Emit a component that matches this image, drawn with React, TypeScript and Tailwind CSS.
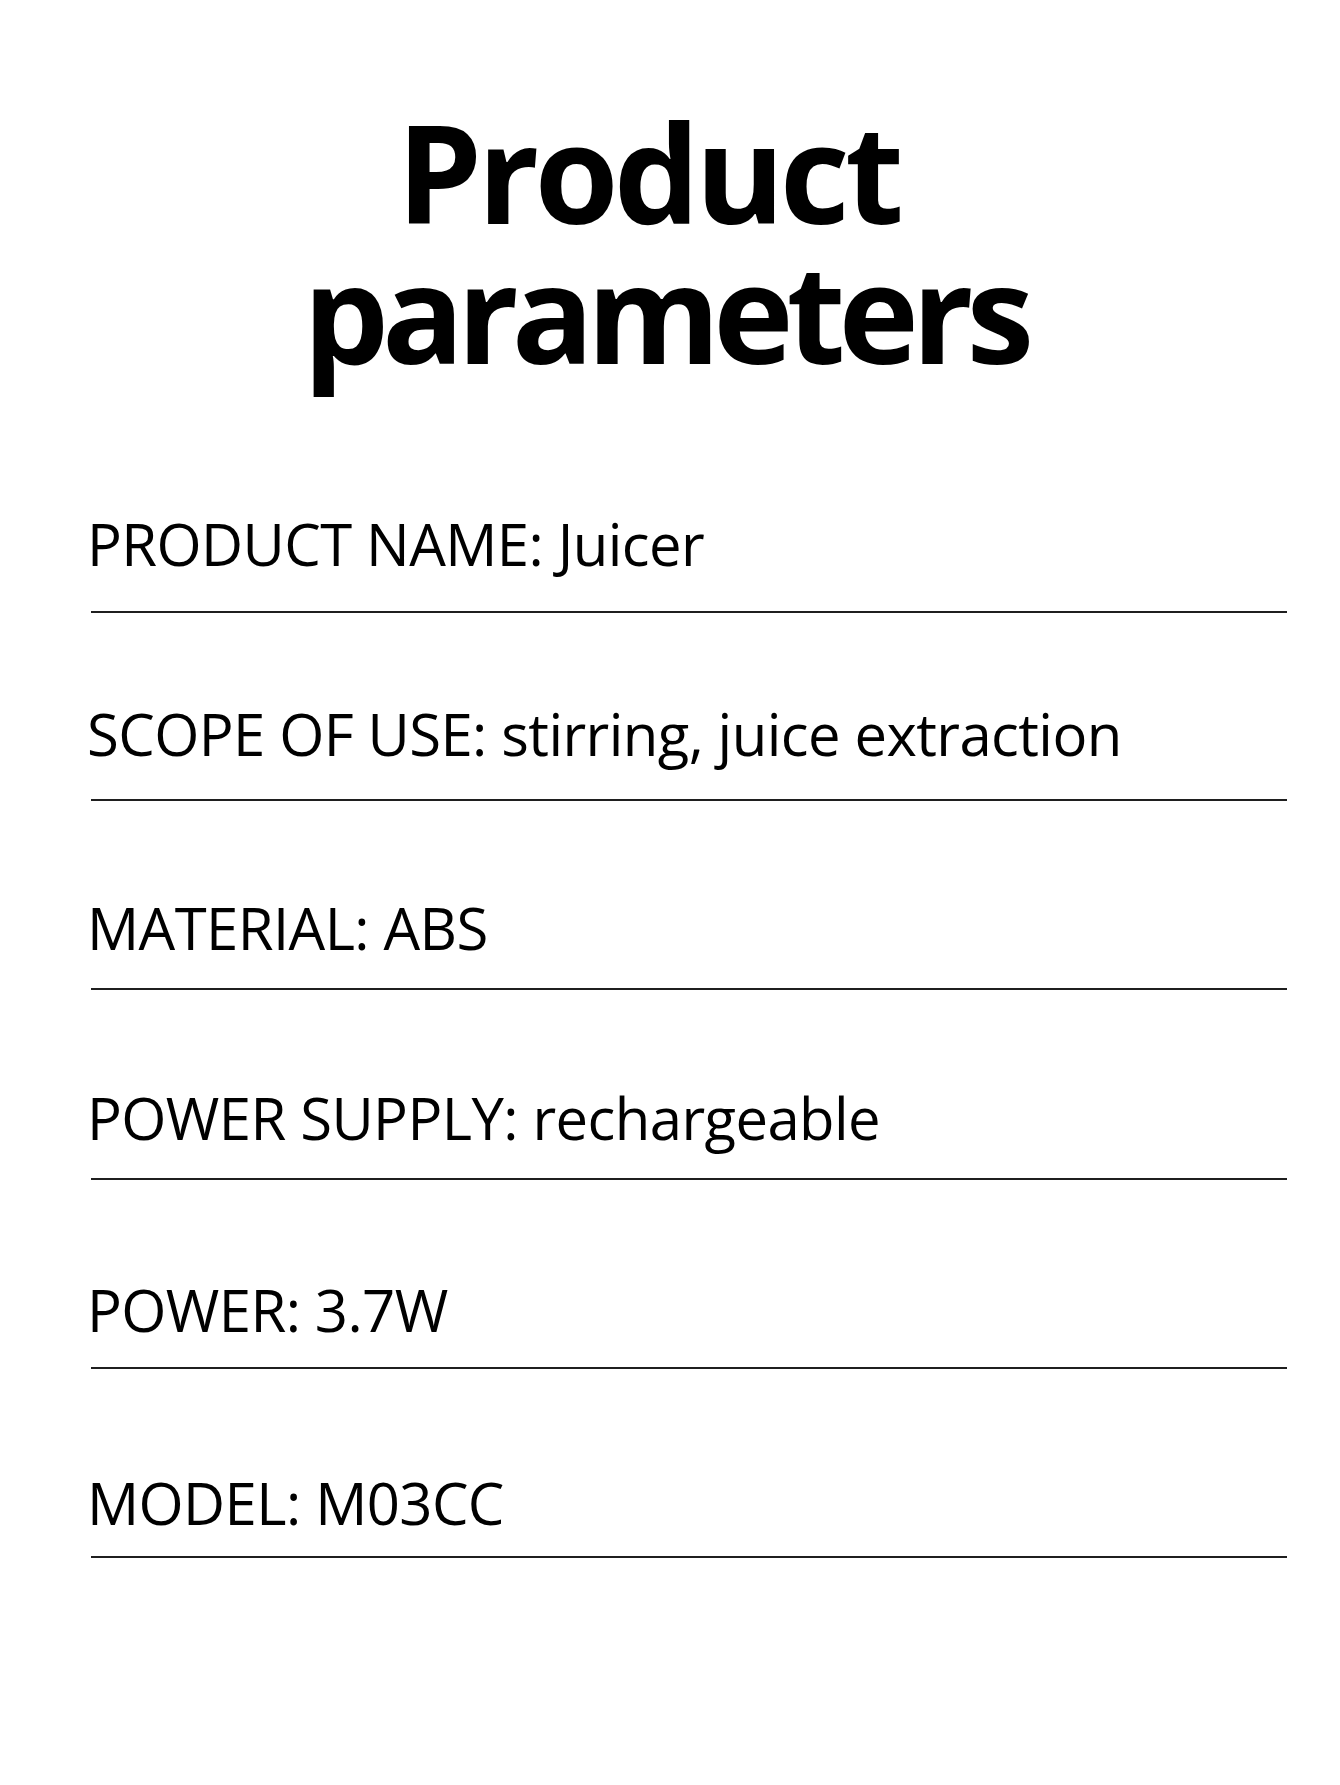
const rows = [
  { label: "PRODUCT NAME", value: "Juicer", top: "pt-[130px]", gap: "mt-[35px]" },
  { label: "SCOPE OF USE", value: "stirring, juice extraction", top: "pt-[89px]", gap: "mt-[33px]" },
  { label: "MATERIAL", value: "ABS", top: "pt-[95px]", gap: "mt-[28px]" },
  { label: "POWER SUPPLY", value: "rechargeable", top: "pt-[96px]", gap: "mt-[28px]" },
  { label: "POWER", value: "3.7W", top: "pt-[98px]", gap: "mt-[25px]" },
  { label: "MODEL", value: "M03CC", top: "pt-[102px]", gap: "mt-[21px]" },
];

const App = () => {
  return (
    <div
      className="min-h-[1785px] w-[1340px] bg-white text-black"
      style={{ fontFamily: "'Open Sans', 'Noto Sans', sans-serif" }}
    >
      {/* Title */}
      <div className="flex flex-col items-center pt-[102px] text-[136px] font-bold leading-[140px]">
        <h1 className="pr-[44px] tracking-[-0.035em]">Product</h1>
        <h1 className="pr-[10px] tracking-[-0.052em]">parameters</h1>
      </div>

      {/* Parameter rows */}
      <div className="flex flex-col">
        {rows.map((row) => (
          <div key={row.label} className={row.top + " flex flex-col"}>
            <p className="pl-[87px] text-[58px] leading-[64px] tracking-[-0.01em] whitespace-nowrap">
              {row.label}: {row.value}
            </p>
            <div className={row.gap + " ml-[91px] h-[2px] w-[1196px] bg-[#1f1f1f]"} />
          </div>
        ))}
      </div>
    </div>
  );
};

export default App;
